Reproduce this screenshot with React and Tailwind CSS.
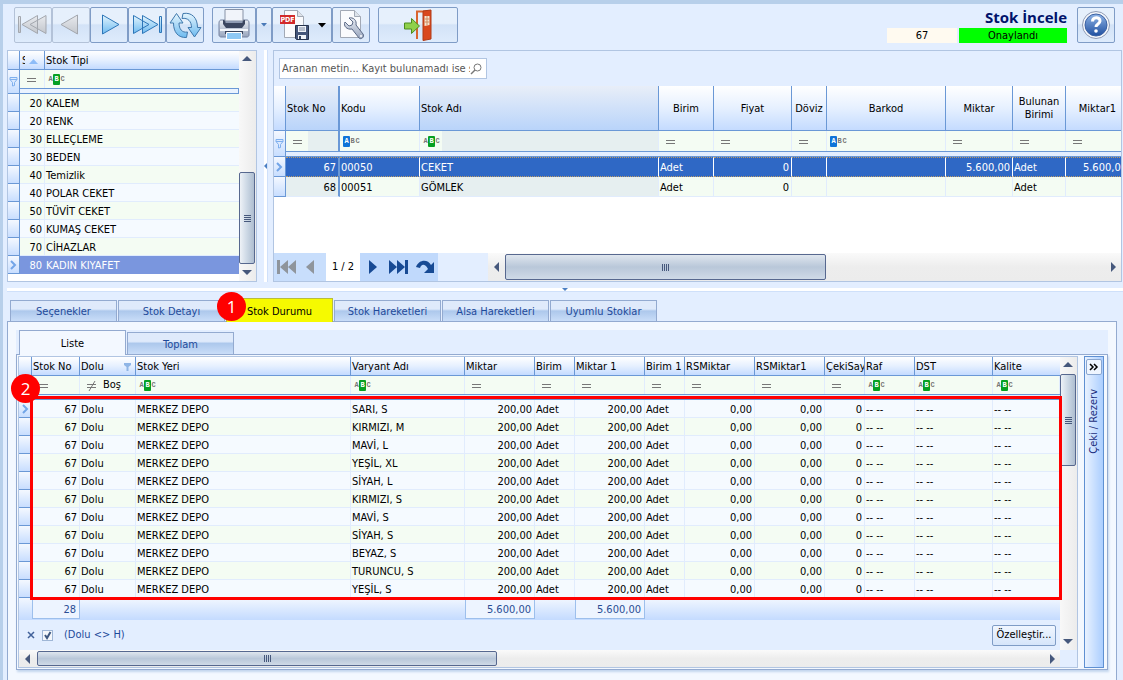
import { useState } from "react";

const stockTypes = [
    [20, "KALEM"],
    [20, "RENK"],
    [30, "ELLEÇLEME"],
    [30, "BEDEN"],
    [40, "Temizlik"],
    [40, "POLAR CEKET"],
    [50, "TÜVİT CEKET"],
    [60, "KUMAŞ CEKET"],
    [70, "CİHAZLAR"],
    [80, "KADIN KIYAFET"],
];

const stockColumns = [
    { title: "Stok No", width: "w-[54px]", filter: "eq", shaded: true, thick: true },
    { title: "Kodu", width: "w-[80px]", filter: "abcStart" },
    { title: "Stok Adı", width: "w-[239px]", filter: "abc", shaded: true },
    { title: "Birim", width: "w-[55px]", filter: "eq", center: true },
    { title: "Fiyat", width: "w-[78px]", filter: "eq", center: true },
    { title: "Döviz", width: "w-[35px]", filter: "eq", center: true },
    { title: "Barkod", width: "w-[119px]", filter: "abcStart", center: true },
    { title: "Miktar", width: "w-[67px]", filter: "eq", center: true },
    { title: "Bulunan Birimi", width: "w-[53px]", filter: "eq", center: true },
    { title: "Miktar1", width: "w-[64px]", filter: "eq", center: true },
];

const stocks = [
    ["67", "00050", "CEKET", "Adet", "0", "", "", "5.600,00", "Adet", "5.600,00"],
    ["68", "00051", "GÖMLEK", "Adet", "0", "", "", "", "Adet", ""],
];
const stockRight = [0, 4, 7, 9];

const detailColumns = [
    { title: "Stok No", width: "w-[48px]", filter: "eq", right: true, total: "28" },
    { title: "Dolu", width: "w-[56px]", filter: "neq" },
    { title: "Stok Yeri", width: "w-[215px]", filter: "abc" },
    { title: "Varyant Adı", width: "w-[114px]", filter: "abc" },
    { title: "Miktar", width: "w-[70px]", filter: "eq", right: true, total: "5.600,00" },
    { title: "Birim", width: "w-[40px]", filter: "eq" },
    { title: "Miktar 1", width: "w-[70px]", filter: "eq", right: true, total: "5.600,00" },
    { title: "Birim 1", width: "w-[40px]", filter: "eq" },
    { title: "RSMiktar", width: "w-[70px]", filter: "eq", right: true },
    { title: "RSMiktar1", width: "w-[70px]", filter: "eq", right: true },
    { title: "ÇekiSay", width: "w-[40px]", filter: "eq", right: true },
    { title: "Raf", width: "w-[50px]", filter: "abc" },
    { title: "DST", width: "w-[78px]", filter: "abc" },
    { title: "Kalite", width: "", filter: "abc" },
];

const variants = [
    "SARI, S",
    "KIRMIZI, M",
    "MAVİ, L",
    "YEŞİL, XL",
    "SİYAH, L",
    "KIRMIZI, S",
    "MAVİ, S",
    "SİYAH, S",
    "BEYAZ, S",
    "TURUNCU, S",
    "YEŞİL, S",
];

const tabs = ["Seçenekler", "Stok Detayı", "Stok Durumu", "Stok Hareketleri", "Alsa Hareketleri", "Uyumlu Stoklar"];

const headerBg = "bg-linear-to-b from-white via-[#e6f0ff] to-[#c4dbff]";
const indicatorBg = "bg-linear-to-b from-[#f4f8ff] to-[#c8deff]";

function FilterIcon({ type }) {
    if (type === "abc" || type === "abcStart") {
        const marked = type === "abc" ? 1 : 0;
        const color = type === "abc" ? "bg-[#06a022]" : "bg-[#0f74d8]";
        return (
            <span className="flex items-center font-['Liberation_Mono',monospace] text-[7px] leading-[11px] font-bold text-[#777]">
                {["A", "B", "C"].map((letter, i) => (
                    <span key={letter} className={i === marked ? `w-[7px] rounded-[1px] text-center text-white ${color}` : "w-[5px] text-center"}>
                        {letter}
                    </span>
                ))}
            </span>
        );
    }
    return (
        <svg width="10" height="11" viewBox="0 0 10 11" fill="none" stroke="#777" className="shrink-0">
            <path d="M0 4.5h9M0 7.5h9" />
            {type === "neq" && <path d="M8 1L2 11" />}
        </svg>
    );
}

function Funnel() {
    return (
        <svg width="9" height="11" viewBox="0 0 9 11" fill="#dceaff" stroke="#7fb0ee" className="mx-auto">
            <path d="M1 1.5h7v2L5.5 6.5v3l-2 .5V6.5L1 3.5zM1 3.5h7" />
        </svg>
    );
}

function RowArrow() {
    return (
        <svg width="7" height="10" viewBox="0 0 7 10" fill="none" stroke="#72a5e8" strokeWidth="2" className="mx-auto">
            <path d="M1 1l4 4-4 4" />
        </svg>
    );
}

function Arrow({ dir, className = "" }) {
    const shapes = {
        up: "M0 6L5 1l5 5z",
        down: "M0 2h10L5 7z",
        left: "M7 0v10L2 5z",
        right: "M3 0v10l5-5z",
    };
    return (
        <svg width="10" height="10" viewBox="0 0 10 10" fill="#46587c" className={className}>
            <path d={shapes[dir]} />
        </svg>
    );
}

function VScroll({ thumb }) {
    return (
        <div className="flex w-[17px] shrink-0 flex-col bg-linear-to-r from-[#f8f8f8] to-[#ececec] pr-px">
            <button type="button" aria-label="Yukarı" className="flex h-[17px] items-center justify-center">
                <Arrow dir="up" />
            </button>
            <div className="flex flex-1 flex-col">
                {thumb === "end" && <div className="flex-1" />}
                <div className="flex h-[92px] flex-col items-center justify-center gap-px rounded-xs border border-[#57688f] bg-linear-to-r from-[#eef2f7] via-[#ccd8e5] to-[#aebdd0]">
                    {[0, 1, 2, 3].map((n) => (
                        <i key={n} className="h-px w-[7px] bg-[#46587c]" />
                    ))}
                </div>
            </div>
            <button type="button" aria-label="Aşağı" className="flex h-[17px] items-center justify-center">
                <Arrow dir="down" />
            </button>
        </div>
    );
}

function HScroll({ thumbWidth, arrows = "w-[19px]", className = "" }) {
    return (
        <div className={`flex bg-linear-to-b from-[#fafafa] via-[#ededed] to-[#ececec] ${className}`}>
            <button type="button" aria-label="Sola" className={`flex items-center justify-center ${arrows}`}>
                <Arrow dir="left" />
            </button>
            <div className="flex min-w-0 flex-1 py-px">
                <div className={`flex items-center justify-center gap-px rounded-xs border border-[#57688f] bg-linear-to-b from-[#dfe6ee] via-[#b9c7d9] to-[#cfdae7] ${thumbWidth}`}>
                    {[0, 1, 2, 3].map((n) => (
                        <i key={n} className="h-[7px] w-px bg-[#46587c]" />
                    ))}
                </div>
            </div>
            <button type="button" aria-label="Sağa" className="flex w-[17px] items-center justify-center">
                <Arrow dir="right" />
            </button>
        </div>
    );
}

function ToolButton({ label, width = "w-[38px]", disabled, children }) {
    return (
        <button
            type="button"
            aria-label={label}
            disabled={disabled}
            className={`flex h-9 shrink-0 items-center justify-center rounded-xs border bg-linear-to-b from-[#e6f0fc] from-45% via-[#d3e3f7] via-50% to-[#deebfc] ${width} ${disabled ? "border-[#b3c2d8]" : "border-[#7f9cc6]"}`}
        >
            {children}
        </button>
    );
}

function Toolbar() {
    return (
        <header className="flex items-start pt-[3px] pr-2 pl-[11px]">
            <svg width="0" height="0" className="absolute">
                <defs>
                    <linearGradient id="blue" x1="0" y1="0" x2="0" y2="1">
                        <stop offset="0" stopColor="#e4f5fd" />
                        <stop offset="1" stopColor="#6dbaf0" />
                    </linearGradient>
                    <linearGradient id="gray" x1="0" y1="0" x2="0" y2="1">
                        <stop offset="0" stopColor="#e8eaee" />
                        <stop offset="1" stopColor="#c2c6cc" />
                    </linearGradient>
                    <linearGradient id="steel" x1="0" y1="0" x2="0" y2="1">
                        <stop offset="0" stopColor="#e9edf4" />
                        <stop offset="1" stopColor="#97a4bc" />
                    </linearGradient>
                    <linearGradient id="help" x1="0" y1="0" x2="0" y2="1">
                        <stop offset="0" stopColor="#8fb4e6" />
                        <stop offset="1" stopColor="#1f4fa0" />
                    </linearGradient>
                </defs>
            </svg>
            <ToolButton label="İlk kayıt" disabled>
                <svg width="36" height="34" viewBox="1 1 36 34" fill="url(#gray)" stroke="#a3a7ae" strokeLinejoin="round">
                    <path d="M4.5 9.5h2v16h-2zM8 17.5l15.5-9v18zM16 17.5l16-9v18z" />
                </svg>
            </ToolButton>
            <ToolButton label="Önceki kayıt" disabled>
                <svg width="36" height="34" viewBox="1 1 36 34" fill="url(#gray)" stroke="#a3a7ae" strokeLinejoin="round">
                    <path d="M9 17.5l16.5-9.5v19z" />
                </svg>
            </ToolButton>
            <ToolButton label="Sonraki kayıt">
                <svg width="36" height="34" viewBox="1 1 36 34" fill="url(#blue)" stroke="#2d76b8" strokeLinejoin="round">
                    <path d="M12.5 8l16.5 9.5-16.5 9.5z" />
                </svg>
            </ToolButton>
            <ToolButton label="Son kayıt">
                <svg width="36" height="34" viewBox="1 1 36 34" fill="url(#blue)" stroke="#2d76b8" strokeLinejoin="round">
                    <path d="M5.5 8.5l15.5 9-15.5 9zM14.5 8.5l15.5 9-15.5 9zM31.5 9.5h2v16h-2z" />
                </svg>
            </ToolButton>
            <ToolButton label="Yenile">
                <svg width="33" height="27" viewBox="0 0 33 27" fill="url(#blue)" stroke="#3f78ac" strokeLinejoin="round">
                    <path d="M7.5 1.5L1 11h3.500C4.500 20 9 26 17.500 25.500l1-5.500C13 21 10 17 10 11h4z" />
                    <path d="M14 1.500l-1 5c6-1 9.500 3 9.500 9h-3.500L25.500 25 32 15.500h-3.500C28.500 6 23 0 14 1.500z" />
                </svg>
            </ToolButton>

            <div className="ml-2 flex">
                <ToolButton label="Yazdır" width="w-11">
                    <svg width="32" height="32" viewBox="0 0 32 32">
                        <path d="M5 11H3c-1 0-2 1-2 3v12c0 1 1 2 2 2h26c1 0 2-1 2-2V14c0-2-1-3-2-3h-2z" fill="url(#steel)" stroke="#7482a0" />
                        <path d="M2 20h28v2H2z" fill="#f3f6fb" />
                        <path d="M5 11h22v4l-3 4H8l-3-4z" fill="#3b4660" />
                        <path d="M7 .5h18V12H7z" fill="#f1f4fa" stroke="#8792a6" />
                        <path d="M7.500 12h17v2h-17z" fill="#8f9bb3" />
                        <path d="M7 22h18v3H7z" fill="#38435c" />
                        <path d="M8.500 23.500h15v7h-15z" fill="#8ec8f4" stroke="#fff" />
                    </svg>
                </ToolButton>
                <ToolButton label="Yazdırma seçenekleri" width="w-4">
                    <svg width="6" height="4" viewBox="0 0 6 4" fill="#4a7ab8"><path d="M0 0h6L3 3.5z" /></svg>
                </ToolButton>
            </div>
            <ToolButton label="PDF kaydet" width="w-[60px]">
                <svg width="32" height="32" viewBox="0 0 32 32">
                    <path d="M6.500 1.500h13l6 6v21h-19z" fill="#fafbfd" stroke="#a2a9b5" />
                    <path d="M19.500 1.500v6h6" fill="#dde3ea" stroke="#a2a9b5" />
                    <path d="M2 6h15v9H2z" fill="#d22a2a" />
                    <text x="9.500" y="13" textAnchor="middle" fontSize="7" fontWeight="bold" fill="#fff">PDF</text>
                    <path d="M17.500 16.500h13v14h-12l-1-1z" fill="#44567a" stroke="#26334d" />
                    <path d="M20 17h8v6h-8zM20 26h8v4h-8z" fill="#f1f4f9" />
                    <path d="M21 19h6M21 21h6" stroke="#7c89a0" />
                    <path d="M21 27h2v3h-2z" fill="#344563" />
                </svg>
                <svg width="8" height="5" viewBox="0 0 8 5" className="ml-2"><path d="M0 0h8L4 4.5z" /></svg>
            </ToolButton>
            <ToolButton label="Ayarlar">
                <svg width="30" height="32" viewBox="0 0 30 32">
                    <path d="M4.500 1.500h14l6 6v21h-20z" fill="#fafbfd" stroke="#a2a9b5" />
                    <path d="M18.500 1.500v6h6" fill="#dde3ea" stroke="#a2a9b5" />
                    <path d="M9 13l4 4 3-1 1-3-4-4c4-1 8 2 7 7l7 9c2 3-2 6-4 4l-7-9c-5 1-9-3-7-7z" fill="url(#steel)" stroke="#5c6a86" />
                    <circle cx="25" cy="27" r="1" fill="#fff" />
                </svg>
            </ToolButton>
            <div className="ml-2">
                <ToolButton label="Çıkış" width="w-20">
                    <svg width="32" height="32" viewBox="0 0 32 32">
                        <path d="M15 30V2.5h13" fill="none" stroke="#d9652f" strokeWidth="2" />
                        <path d="M21 2l8-1v29l-8 1.500z" fill="#d9481d" stroke="#b03a16" />
                        <path d="M22.500 7h5v9l-5 1z" fill="#f4e6d2" />
                        <path d="M25 7v9M22.500 10h5M22.500 13h5" stroke="#d08a60" />
                        <path d="M2.500 14h7V9.5l8 7.5-8 7.500V20h-7z" fill="#8fd04a" stroke="#4d8c1f" />
                    </svg>
                </ToolButton>
            </div>

            <div className="ml-auto flex w-[180px] flex-col">
                <h1 className="pb-px text-right font-['Open_Sans',sans-serif] text-[15px] leading-5 font-bold text-[#00126b]">Stok İncele</h1>
                <div className="flex gap-0.5 text-center leading-[15px]">
                    <span className="w-[70px] bg-[#fffaf0]">67</span>
                    <span className="flex-1 bg-[#00ff00]">Onaylandı</span>
                </div>
            </div>
            <div className="ml-2.5">
                <ToolButton label="Yardım">
                    <svg width="30" height="30" viewBox="0 0 30 30">
                        <circle cx="15" cy="15" r="13.5" fill="#f5f7fb" stroke="#8e9bb5" />
                        <circle cx="15" cy="15" r="11" fill="url(#help)" stroke="#3c62a4" />
                        <path d="M11.5 11.5c0-5 7.500-5 7.500-.5 0 3-4 3-4 6" fill="none" stroke="#fff" strokeWidth="3" />
                        <circle cx="15" cy="21" r="1.8" fill="#fff" />
                    </svg>
                </ToolButton>
            </div>
        </header>
    );
}

function StockTypes() {
    return (
        <section className="flex w-[250px] shrink-0 border border-[#b1c5e2] bg-white">
            <div className="min-w-0 flex-1">
                <table className="w-full table-fixed border-separate border-spacing-0">
                    <colgroup>
                        <col className="w-3" />
                        <col className="w-[25px]" />
                        <col />
                    </colgroup>
                    <thead className="text-left">
                        <tr>
                            <th className={`h-[19px] border-r border-b border-[#6a98d6] p-0 ${headerBg}`}></th>
                            <th className={`overflow-hidden border-r border-b border-[#6a98d6] p-0 pt-0.5 font-normal ${headerBg}`}>
                                <div className="flex items-center gap-1 pl-0.5">
                                    <span className="w-[3px] overflow-hidden">S</span>
                                    <svg width="9" height="5" viewBox="0 0 9 5" fill="#8dbcf8"><path d="M0 5l4.500-5L9 5z" /></svg>
                                </div>
                            </th>
                            <th className={`border-b border-[#6a98d6] p-0 pt-0.5 pl-px font-normal ${headerBg}`}>Stok Tipi</th>
                        </tr>
                        <tr>
                            <td rowSpan="2" className={`border-r border-b border-[#6a98d6] p-0 ${indicatorBg}`}><Funnel /></td>
                            <td className="h-[18px] border-r border-[#e1ecfd] bg-[#f4fcf3] p-0 pl-[7px]"><FilterIcon type="eq" /></td>
                            <td className="bg-[#f4fcf3] p-0 pl-[3px]"><FilterIcon type="abc" /></td>
                        </tr>
                        <tr>
                            <td colSpan="2" className="h-1.5 border border-l-0 border-[#6a98d6] bg-[#eaf3ff] p-0"></td>
                        </tr>
                    </thead>
                    <tbody>
                        {stockTypes.map(([no, name], i) => {
                            const selected = i === stockTypes.length - 1;
                            const cell = selected
                                ? "border-[#7a96de] bg-[#7a96de] text-white"
                                : `border-[#e1ecfd] ${i % 2 ? "bg-[#f5faff]" : "bg-[#f4fcf3]"}`;
                            return (
                                <tr key={name}>
                                    <td className={`h-[18px] border-r border-b border-[#6a98d6] p-0 ${indicatorBg}`}>{selected && <RowArrow />}</td>
                                    <td className={`border-r border-b p-0 pt-0.5 pr-0.5 text-right ${cell}`}>{no}</td>
                                    <td className={`border-b p-0 pt-0.5 pl-px ${cell}`}>{name}</td>
                                </tr>
                            );
                        })}
                    </tbody>
                </table>
            </div>
            <VScroll thumb="end" />
        </section>
    );
}

function Navigator() {
    return (
        <div className="flex items-center">
            <div className="flex h-full w-[52px] items-center gap-2.5 bg-[#c8defc] pl-[3px]">
                <button type="button" aria-label="İlk">
                    <svg width="19" height="14" viewBox="0 0 19 14" fill="#8f959c"><path d="M0 0h3v14H0zM11 0v14L3 7zM19 0v14l-8-7z" /></svg>
                </button>
                <button type="button" aria-label="Önceki">
                    <svg width="9" height="14" viewBox="0 0 9 14" fill="#8f959c"><path d="M8 0v14L0 7z" /></svg>
                </button>
            </div>
            <span className="flex h-full w-[34px] items-center justify-center bg-white">1 / 2</span>
            <div className="flex h-full w-[78px] items-center gap-3 bg-[#c0d9fc] pl-[9px]">
                <button type="button" aria-label="Sonraki">
                    <svg width="8" height="14" viewBox="0 0 8 14" fill="#174a94"><path d="M0 0v14l8-7z" /></svg>
                </button>
                <button type="button" aria-label="Son">
                    <svg width="19" height="14" viewBox="0 0 19 14" fill="#174a94"><path d="M0 0v14l8-7zM8 0v14l8-7zM16 0h3v14h-3z" /></svg>
                </button>
                <button type="button" aria-label="Tekrar" className="-ml-1">
                    <svg width="19" height="14" viewBox="0 0 19 14" fill="#174a94"><path d="M0 7C3-1 12-1 15 5l3-3v11H8l4-4C9 3 5 4 4 8z" /></svg>
                </button>
            </div>
        </div>
    );
}

function StockGrid() {
    const [search, setSearch] = useState("");

    return (
        <section className="flex min-w-0 flex-1 flex-col overflow-hidden border border-[#b1c5e2] bg-white">
            <div className="bg-[#e3eeff] px-[5px] pt-[7px] pb-[7px]">
                <label className="flex h-[21px] w-[208px] items-center border border-[#b1c5e2] bg-white pr-1 pl-0.5">
                    <input
                        type="text"
                        aria-label="Ara"
                        placeholder="Aranan metin... Kayıt bulunamadı ise sa"
                        value={search}
                        onChange={(e) => setSearch(e.target.value)}
                        className="min-w-0 flex-1 outline-none placeholder:text-[#555]"
                    />
                    <svg width="12" height="12" viewBox="0 0 12 12" fill="none" stroke="#777">
                        <circle cx="7.5" cy="4.5" r="3.5" />
                        <path d="M5 7L1 11" strokeWidth="1.5" />
                    </svg>
                </label>
            </div>
            <div className="flex-1 overflow-hidden">
                <table className="w-[856px] min-w-full table-fixed border-separate border-spacing-0">
                    <colgroup>
                        <col className="w-3" />
                        {stockColumns.map((c) => (
                            <col key={c.title} className={c.width} />
                        ))}
                    </colgroup>
                    <thead>
                        <tr>
                            <th className={`h-[45px] border-r border-b border-[#6a98d6] p-0 ${headerBg}`}></th>
                            {stockColumns.map((c) => (
                                <th
                                    key={c.title}
                                    className={`border-b border-[#6a98d6] p-0 leading-[13px] font-normal ${c.thick ? "border-r-2" : "border-r"} ${c.center ? "text-center" : "pl-px text-left"} ${c.shaded ? "bg-linear-to-b from-[#e8eef8] to-[#b9d4fa]" : headerBg}`}
                                >
                                    {c.title}
                                </th>
                            ))}
                        </tr>
                        <tr>
                            <td rowSpan="2" className={`border-r border-b border-[#6a98d6] p-0 ${indicatorBg}`}><Funnel /></td>
                            {stockColumns.map((c) => (
                                <td key={c.title} className={`h-5 p-0 ${c.thick ? "border-r-2 border-[#6a98d6]" : "border-r border-[#e1ecfd]"} ${c.shaded ? "bg-[#e6eff0]" : "bg-[#f4fcf3]"}`}>
                                    <div className={`flex h-full w-[22px] items-center bg-[#f4fcf3] ${c.filter === "eq" ? "pl-[7px]" : "pl-[3px]"}`}>
                                        <FilterIcon type={c.filter} />
                                    </div>
                                </td>
                            ))}
                        </tr>
                        <tr>
                            <td colSpan="10" className="h-1.5 border-y border-[#6a98d6] bg-[#e3eeff] p-0"></td>
                        </tr>
                    </thead>
                    <tbody>
                        {stocks.map((row, r) => (
                            <tr key={row[0]}>
                                <td className={`h-5 border-r border-b border-[#6a98d6] p-0 ${indicatorBg}`}>{r === 0 && <RowArrow />}</td>
                                {row.map((value, i) => {
                                    const c = stockColumns[i];
                                    const side = c.thick ? "border-r-2 border-r-[#6a98d6]" : r === 0 ? "border-r border-r-white" : "border-r border-r-[#e1ecfd]";
                                    const look = r === 0
                                        ? "border-y border-dotted border-y-[#b99b6a] bg-[#2f68c5] text-white [border-right-style:solid]"
                                        : `border-b border-b-[#e1ecfd] ${c.shaded ? "bg-[#e6eff0]" : "bg-[#f4fcf3]"}`;
                                    return (
                                        <td key={c.title} className={`p-0 pt-0.5 whitespace-nowrap ${side} ${look} ${stockRight.includes(i) ? "pr-0.5 text-right" : "pl-px"}`}>
                                            {value}
                                        </td>
                                    );
                                })}
                            </tr>
                        ))}
                    </tbody>
                </table>
            </div>
            <div className="flex h-7 bg-[#e3eeff]">
                <Navigator />
                <div className="w-[50px] shrink-0" />
                <HScroll thumbWidth="w-[321px]" arrows="w-[17px]" className="min-w-0 flex-1" />
            </div>
        </section>
    );
}

function DetailGrid() {
    const [filterOn, setFilterOn] = useState(true);

    return (
        <section className="flex min-w-0 flex-1 flex-col border border-[#b1c5e2] bg-[#e3eeff]">
            <div className="flex">
                <div className="min-w-0 flex-1">
                    <div className="relative">
                        <table className="w-full table-fixed border-separate border-spacing-0">
                            <colgroup>
                                <col className="w-[13px]" />
                                {detailColumns.map((c) => (
                                    <col key={c.title} className={c.width} />
                                ))}
                            </colgroup>
                            <thead>
                                <tr>
                                    <th className={`h-[19px] border-r border-b border-[#6a98d6] p-0 ${headerBg}`}></th>
                                    {detailColumns.map((c) => (
                                        <th key={c.title} className={`overflow-hidden border-r border-b border-[#6a98d6] p-0 pt-0.5 pl-px text-left font-normal whitespace-nowrap last:border-r-0 ${headerBg}`}>
                                            {c.filter === "neq" ? (
                                                <span className="flex items-center justify-between pr-1">
                                                    {c.title}
                                                    <svg width="7" height="8" viewBox="0 0 7 8" fill="#8fb5e6"><path d="M0 0h7v2L4.5 4v4h-2V4L0 2z" /></svg>
                                                </span>
                                            ) : (
                                                c.title
                                            )}
                                        </th>
                                    ))}
                                </tr>
                                <tr>
                                    <td rowSpan="2" className={`border-r border-b border-[#6a98d6] p-0 ${indicatorBg}`}><Funnel /></td>
                                    {detailColumns.map((c) => (
                                        <td key={c.title} className={`h-[18px] border-r border-[#e1ecfd] bg-[#f4fcf3] p-0 ${c.filter === "eq" || c.filter === "neq" ? "pl-[7px]" : "pl-[3px]"}`}>
                                            <span className="flex items-center gap-1.5">
                                                <FilterIcon type={c.filter} />
                                                {c.filter === "neq" && "Boş"}
                                            </span>
                                        </td>
                                    ))}
                                </tr>
                                <tr>
                                    <td colSpan="14" className="h-1.5 border-y border-[#6a98d6] bg-[#e3eeff] p-0"></td>
                                </tr>
                            </thead>
                            <tbody>
                                {variants.map((name, r) => {
                                    const values = ["67", "Dolu", "MERKEZ DEPO", name, "200,00", "Adet", "200,00", "Adet", "0,00", "0,00", "0", "-- --", "-- --", "-- --"];
                                    return (
                                        <tr key={name}>
                                            <td className={`h-[18px] border-r border-b border-[#6a98d6] p-0 ${indicatorBg}`}>{r === 0 && <RowArrow />}</td>
                                            {values.map((value, i) => (
                                                <td
                                                    key={i}
                                                    className={`border-r border-b border-[#e1ecfd] p-0 pt-0.5 whitespace-nowrap ${r % 2 ? "bg-[#f4fcf3]" : "bg-[#f5faff]"} ${detailColumns[i].right ? "pr-0.5 text-right" : "pl-px"}`}
                                                >
                                                    {value}
                                                </td>
                                            ))}
                                        </tr>
                                    );
                                })}
                            </tbody>
                            <tfoot>
                                <tr className="bg-linear-to-b from-[#f2f7ff] to-[#c4dbff] text-[#2a4d94]">
                                    <td className="h-[22px] p-0"></td>
                                    {detailColumns.map((c) => (
                                        <td key={c.title} className="h-[22px] p-0 align-top">
                                            {c.total && (
                                                <div className="h-[21px] border border-t-0 border-[#9dbfec] bg-[#edf4ff] pt-0.5 pr-[3px] text-right leading-5">{c.total}</div>
                                            )}
                                        </td>
                                    ))}
                                </tr>
                            </tfoot>
                        </table>
                        {/* callout frame around the rows */}
                        <div className="pointer-events-none absolute top-[39px] -right-0.5 bottom-[20px] left-[11px] border-3 border-[#ff0000]" />
                        <Badge className="top-[17px] -left-2">2</Badge>
                    </div>
                    <div className="flex h-[30px] items-center pr-1 pl-2 text-[#1e4a9a]">
                        <button type="button" aria-label="Filtreyi kaldır">
                            <svg width="8" height="8" viewBox="0 0 8 8" fill="none" stroke="#41619a" strokeWidth="1.5"><path d="M1 1l6 6M7 1L1 7" /></svg>
                        </button>
                        <label className="ml-[7px] flex items-center gap-[11px]">
                            <span className="relative flex">
                                <input
                                    type="checkbox"
                                    checked={filterOn}
                                    onChange={(e) => setFilterOn(e.target.checked)}
                                    className="size-[11px] appearance-none border border-[#9fb6d6] bg-[#f4f7fb]"
                                />
                                {filterOn && (
                                    <svg width="11" height="11" viewBox="0 0 11 11" fill="none" stroke="#3f5880" strokeWidth="2" className="pointer-events-none absolute inset-0">
                                        <path d="M3 5l2 3 3.500-6" />
                                    </svg>
                                )}
                            </span>
                            (Dolu &lt;&gt; H)
                        </label>
                        <button type="button" className="ml-auto h-[21px] w-16 rounded-xs border border-[#7f9cc6] bg-linear-to-b from-[#f0f6ff] to-[#d6e5fa] whitespace-nowrap text-black">
                            Özelleştir...
                        </button>
                    </div>
                </div>
                <VScroll thumb="start" />
            </div>
            <div className="flex h-[17px] pr-[17px]">
                <HScroll thumbWidth="w-[460px]" arrows="w-[18px]" className="min-w-0 flex-1" />
            </div>
        </section>
    );
}

function Badge({ className, children }) {
    return (
        <span className={`absolute z-10 flex size-[29px] items-center justify-center rounded-full bg-[#ff0000] font-['Open_Sans',sans-serif] text-[17px] text-white ${className}`}>
            {children}
        </span>
    );
}

const tabBg = "border-[#93aad0] bg-linear-to-b from-[#dfeafb] from-40% via-[#adc8ec] via-50% to-[#c9ddf8] text-[#1e4a9a]";

function StockTabs() {
    const [active, setActive] = useState("Stok Durumu");
    const [view, setView] = useState("Liste");

    return (
        <section className="flex flex-1 flex-col pr-1.5 pl-1">
            <div role="tablist" className="relative flex h-6 items-end gap-px pl-[3px]">
                {tabs.map((tab) => (
                    <button
                        key={tab}
                        type="button"
                        role="tab"
                        aria-selected={tab === active}
                        onClick={() => setActive(tab)}
                        className={`w-[107px] border border-b-0 pt-0.5 text-center whitespace-nowrap ${tab === active ? "h-6 border-[#b9bd3a] bg-[#f6fa00]" : `mb-px h-[21px] ${tabBg}`}`}
                    >
                        {tab}
                    </button>
                ))}
                <Badge className="-top-1.5 left-[210px]">1</Badge>
            </div>
            <div className="-mt-px flex flex-1 flex-col border border-b-0 border-[#93aad0] bg-[#f3f8ff] px-2 pt-2">
                <div role="tablist" className="flex h-6 items-end gap-px bg-[#e3eeff] pl-[3px]">
                    {["Liste", "Toplam"].map((tab) => (
                        <button
                            key={tab}
                            type="button"
                            role="tab"
                            aria-selected={tab === view}
                            onClick={() => setView(tab)}
                            className={`w-[107px] border border-b-0 pt-0.5 text-center ${tab === view ? "z-10 -mb-px h-[25px] border-[#93aad0] bg-[#f3f8ff]" : `h-[22px] ${tabBg}`}`}
                        >
                            {tab}
                        </button>
                    ))}
                </div>
                <div className="flex gap-1.5 border border-[#93aad0] bg-[#f3f8ff] py-px pr-[3px] pl-px shadow-[1px_2px_2px_#c4d6ee]">
                    <DetailGrid />
                    <aside className="flex w-5 flex-col items-center border border-[#5f90d2] bg-linear-to-r from-[#e9f2ff] to-[#abceff] pt-0.5">
                        <button type="button" aria-label="Genişlet" className="flex h-4 w-4 items-center justify-center rounded-xs border border-[#8aa6cf] bg-[#eef5ff]">
                            <svg width="10" height="8" viewBox="0 0 10 8" fill="none" stroke="#000" strokeWidth="1.5"><path d="M1 1l3 3-3 3M5 1l3 3-3 3" /></svg>
                        </button>
                        <span className="mt-3.5 rotate-180 whitespace-nowrap text-[#1c2f80] [writing-mode:vertical-rl]">Çeki / Rezerv</span>
                    </aside>
                </div>
            </div>
        </section>
    );
}

export default function App() {
    return (
        <div className="flex min-h-screen flex-col border-t-4 border-l-3 border-t-[#b7cfea] border-l-[#b7cfea] bg-[#e3eeff] font-['DejaVu_Sans_Condensed','Noto_Sans',sans-serif] text-[11px] leading-[14px] text-black">
            <Toolbar />
            <main className="flex flex-1 flex-col pt-[7px]">
                <div className="flex h-[232px] pr-px pl-1">
                    <StockTypes />
                    <div className="flex w-4 shrink-0 items-center pl-[7px]">
                        <div className="flex h-full w-1 items-center border-r border-[#cfe0fa] bg-white">
                            <svg width="3" height="6" viewBox="0 0 3 6" fill="#4a7fc4"><path d="M3 0v6L0 3z" /></svg>
                        </div>
                    </div>
                    <StockGrid />
                </div>
                <div className="my-1.5 ml-1 flex h-1 justify-center border-b border-[#cfe0fa] bg-white">
                    <svg width="6" height="3" viewBox="0 0 6 3" fill="#4a7fc4"><path d="M0 0h6L3 3z" /></svg>
                </div>
                <StockTabs />
            </main>
        </div>
    );
}
